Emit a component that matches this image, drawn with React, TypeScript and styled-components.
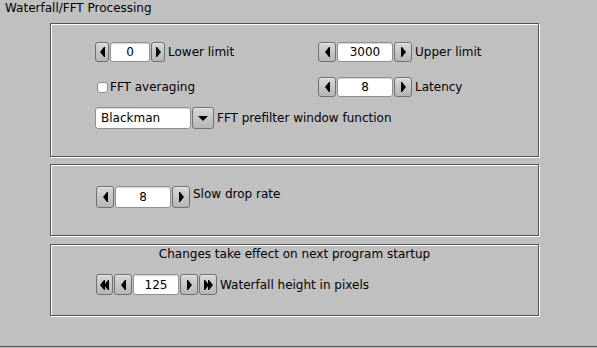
import styled, { createGlobalStyle } from "styled-components";

const COLORS = {
    bg: "#c0c0c0",
    frameDark: "#555555",
    frameLight: "#ffffff",
    btnBorder: "#6f6f6f",
    inputBorder: "#8f8f8f",
    text: "#000000"
};

const GlobalStyle = createGlobalStyle`
    html, body {
        margin: 0;
        background: ${COLORS.bg};
        font-family: "DejaVu Sans", "Liberation Sans", sans-serif;
        font-size: 12px;
        color: ${COLORS.text};
    }
`;

const Panel = styled.div`
    width: 597px;
    height: 346px;
    border-bottom: 1px solid ${COLORS.frameDark};
    display: flex;
    flex-direction: column;
`;

const Title = styled.div`
    height: 23px;
    padding-left: 5px;
    line-height: 16px;
    box-sizing: border-box;
`;

const Frames = styled.div`
    margin-left: 50px;
    width: 489px;
    display: flex;
    flex-direction: column;
`;

// engraved frame: dark rect with a white one offset by a pixel
const Frame = styled.section<{ $height: number; $gap?: number }>`
    box-sizing: border-box;
    height: ${(p) => p.$height}px;
    margin-top: ${(p) => p.$gap ?? 0}px;
    border: 1px solid ${COLORS.frameDark};
    box-shadow: 1px 1px 0 ${COLORS.frameLight}, inset 1px 1px 0 ${COLORS.frameLight};
    display: flex;
    flex-direction: column;
`;

const TopFrame = styled(Frame)`
    padding: 18px 0 0 44px;
`;

const DropFrame = styled(Frame)`
    padding: 21px 0 0 45px;
`;

const StartupFrame = styled(Frame)`
    padding: 1px 0 0 45px;
`;

const Note = styled.div`
    line-height: 16px;
    margin-left: -45px;
    text-align: center;
`;

const TwoCol = styled.div`
    display: grid;
    grid-template-columns: 223px auto;
    grid-auto-rows: 20px;
    row-gap: 15px;
`;

const Row = styled.div<{ $height?: number; $gap?: number }>`
    display: flex;
    align-items: center;
    height: ${(p) => p.$height ?? 20}px;
    margin-top: ${(p) => p.$gap ?? 0}px;
`;

const Label = styled.span<{ $raise?: number }>`
    margin-left: 3px;
    white-space: nowrap;
    position: relative;
    top: ${(p) => -(p.$raise ?? 0)}px;
`;

const ArrowButton = styled.div<{ $w: number }>`
    box-sizing: border-box;
    width: ${(p) => p.$w}px;
    height: 100%;
    border: 1px solid ${COLORS.btnBorder};
    border-radius: 3px;
    background: linear-gradient(#d8d8d8, #c4c4c4 55%, #b6b6b6);
    box-shadow: inset 0 1px 0 #e8e8e8;
    display: flex;
    align-items: center;
    justify-content: center;
    flex: none;
`;

const ValueBox = styled.div<{ $w: number; $align?: string }>`
    box-sizing: border-box;
    width: ${(p) => p.$w}px;
    height: 100%;
    margin: 0 1px;
    background: #fff;
    border: 1px solid ${COLORS.inputBorder};
    border-radius: 3px;
    box-shadow: inset 0 1px 0 #d8d8d8;
    display: flex;
    align-items: center;
    justify-content: ${(p) => p.$align ?? "center"};
    padding: 0 5px;
    flex: none;
`;

const Counter = styled.div<{ $height: number }>`
    display: flex;
    height: ${(p) => p.$height}px;
    flex: none;
`;

const CheckBox = styled.span`
    box-sizing: border-box;
    width: 11px;
    height: 11px;
    margin: 0 2px 0 2px;
    background: #fff;
    border: 1px solid ${COLORS.inputBorder};
    border-radius: 3px;
    flex: none;
`;

const ChoiceField = styled(ValueBox)`
    margin: 0 1px 0 0;
    padding-left: 5px;
`;

const Arrow = ({ dir, double }: { dir: "left" | "right"; double?: boolean }) => {
    const single = "0,5 4,0 5,0 5,10 4,10";
    return (
        <svg width={double ? 9 : 5} height={10} viewBox={`0 0 ${double ? 9 : 5} 10`}
            style={{ transform: dir === "right" ? "scaleX(-1)" : undefined }}>
            <polygon points={single} fill="#000" />
            {double && <polygon points={single} fill="#000" transform="translate(4 0)" />}
        </svg>
    );
};

type SpinProps = {
    value: string;
    btn: number;
    input: number;
    height?: number;
    fast?: boolean;
};

const Spin = ({ value, btn, input, height = 20, fast }: SpinProps) => (
    <Counter $height={height}>
        {fast && <ArrowButton $w={btn - 1} style={{ marginRight: 1 }}><Arrow dir="left" double /></ArrowButton>}
        <ArrowButton $w={btn}><Arrow dir="left" /></ArrowButton>
        <ValueBox $w={input}>{value}</ValueBox>
        <ArrowButton $w={btn}><Arrow dir="right" /></ArrowButton>
        {fast && <ArrowButton $w={btn} style={{ marginLeft: 1 }}><Arrow dir="right" double /></ArrowButton>}
    </Counter>
);

export default function App() {
    return (
        <>
            <GlobalStyle />
            <Panel>
                <Title>Waterfall/FFT Processing</Title>
                <Frames>
                    <TopFrame $height={134}>
                        <TwoCol>
                            <Row>
                                <Spin value="0" btn={14} input={40} />
                                <Label>Lower limit</Label>
                            </Row>
                            <Row>
                                <Spin value="3000" btn={18} input={56} />
                                <Label>Upper limit</Label>
                            </Row>
                            <Row>
                                <CheckBox />
                                <span>FFT averaging</span>
                            </Row>
                            <Row>
                                <Spin value="8" btn={18} input={56} />
                                <Label>Latency</Label>
                            </Row>
                        </TwoCol>
                        <Row $height={22} $gap={10}>
                            <ChoiceField $w={96} $align="flex-start">Blackman</ChoiceField>
                            <ArrowButton $w={22}>
                                <svg width="10" height="5" viewBox="0 0 10 5">
                                    <polygon points="0,0 10,0 5,5" fill="#000" />
                                </svg>
                            </ArrowButton>
                            <Label>FFT prefilter window function</Label>
                        </Row>
                    </TopFrame>
                    <DropFrame $height={72} $gap={7}>
                        <Row $height={22}>
                            <Spin value="8" btn={18} input={56} height={22} />
                            <Label $raise={3}>Slow drop rate</Label>
                        </Row>
                    </DropFrame>
                    <StartupFrame $height={72} $gap={8}>
                        <Note>Changes take effect on next program startup</Note>
                        <Row $height={21} $gap={12}>
                            <Spin value="125" btn={18} input={46} height={21} fast />
                            <Label>Waterfall height in pixels</Label>
                        </Row>
                    </StartupFrame>
                </Frames>
            </Panel>
        </>
    );
}
